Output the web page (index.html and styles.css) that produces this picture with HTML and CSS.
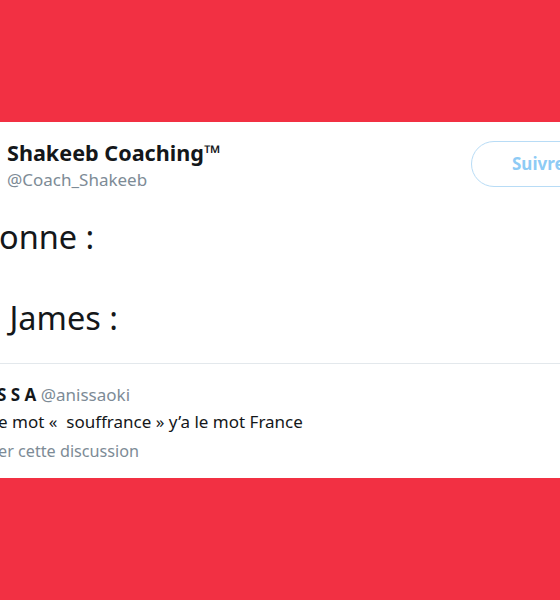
FILE: index.html
```html
<!DOCTYPE html>
<html lang="fr">
<head>
<meta charset="utf-8">
<link rel="stylesheet" href="styles.css">
</head>
<body>
<div class="card">
  <div class="tweet">
    <div class="header">
      <div class="ident">
        <div class="name">Shakeeb Coaching™</div>
        <div class="handle">@Coach_Shakeeb</div>
      </div>
      <div class="follow">Suivre</div>
    </div>
    <div class="body">
      <p class="line cut1">onne :</p>
      <p class="line blank">&nbsp;</p>
      <p class="line cut2">&nbsp;James :</p>
    </div>
  </div>
  <div class="quote">
    <div class="qhead"><span class="qname">S S A</span> <span class="qhandle">@anissaoki</span></div>
    <div class="qtext">e mot «&nbsp; souffrance » y’a le mot France</div>
    <div class="qlink">er cette discussion</div>
  </div>
</div>
</body>
</html>
```

FILE: styles.css
```css
html, body {
  margin: 0;
  padding: 0;
  background: #f23043;
  font-family: "Noto Sans", "Open Sans", sans-serif;
  color: #14171a;
}
.card {
  margin-top: 122px;
  height: 356px;
  background: #ffffff;
  overflow: hidden;
}
.tweet {
  padding: 0 0 0 7px;
  border-bottom: 1px solid #e3e8ec;
  height: 242px;
  box-sizing: border-box;
}
.header {
  display: flex;
  align-items: flex-start;
  justify-content: space-between;
  padding-top: 15px;
}
.name {
  font-weight: 700;
  font-size: 21.6px;
  line-height: 31px;
}
.handle {
  font-size: 17px;
  line-height: 24px;
  color: #7d8b96;
}
.follow {
  margin-top: 4px;
  margin-right: -40px;
  width: 129px;
  height: 46px;
  box-sizing: border-box;
  border: 1.5px solid #b8dcf6;
  border-radius: 23px;
  padding-left: 40px;
  color: #8ecbf5;
  font-weight: 700;
  font-size: 17px;
  line-height: 43px;
}
.body {
  padding-top: 25px;
}
.line {
  margin: 0;
  font-size: 32.5px;
  line-height: 40.5px;
}
.cut1 { margin-left: -8px; }
.cut2 { margin-left: -6px; }
.quote {
  padding: 16px 0 0 0;
}
.qhead {
  font-size: 17px;
  line-height: 30px;
  margin-left: -3px;
}
.qname { font-weight: 700; }
.qhandle { color: #7d8b96; }
.qtext {
  font-size: 17px;
  line-height: 28px;
  margin-top: -2px;
  margin-left: -2px;
}
.qlink {
  font-size: 16.2px;
  line-height: 30px;
  color: #7d8b96;
  margin-left: -2px;
}
```
